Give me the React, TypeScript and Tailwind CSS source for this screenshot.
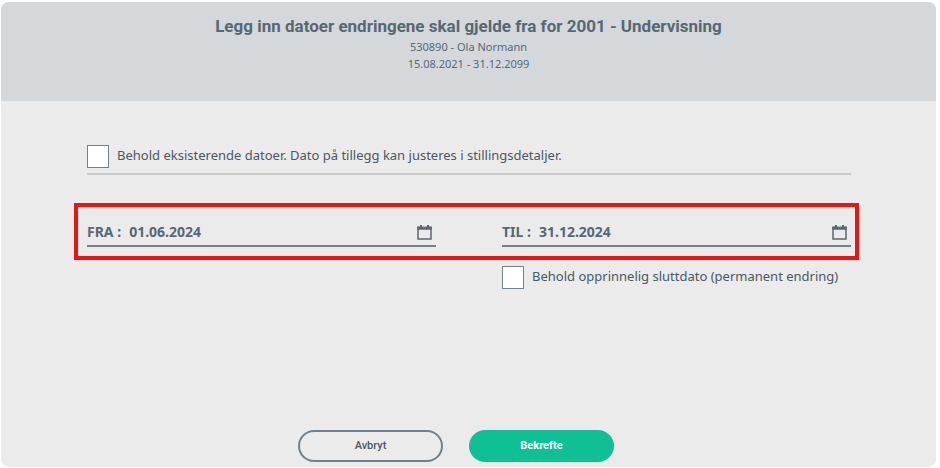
import React, { useState } from 'react';

const CalendarIcon: React.FC = () => (
  <svg className="w-[15px] h-[15px]" viewBox="0 0 15 15" fill="none" aria-hidden="true">
    <path d="M1 2.500h13v11.500H1z" stroke="currentColor" strokeWidth={1.5} />
    <path d="M.3 1.500h14.400v3.200H.3z" fill="currentColor" />
    <path d="M3 0h2v3H3zM10 0h2v3h-2z" fill="currentColor" />
    <path d="M5.600 1.200h3.800v1H5.600z" fill="#ebebeb" opacity={0.5} />
  </svg>
);

interface CheckboxProps {
  id: string;
  label: string;
}

const Checkbox: React.FC<CheckboxProps> = ({ id, label }) => {
  const [checked, setChecked] = useState(false);

  return (
    <div className="flex items-start gap-2">
      <input
        id={id}
        type="checkbox"
        checked={checked}
        onChange={e => setChecked(e.target.checked)}
        className="appearance-none shrink-0 w-[22px] h-[23px] bg-white border border-[#74828c] checked:bg-[#10c095]"
      />
      <label htmlFor={id} className="text-[13px] leading-5 text-[#4a5863]">{label}</label>
    </div>
  );
};

interface DateFieldProps {
  id: string;
  label: string;
  initial: string;
}

const DateField: React.FC<DateFieldProps> = ({ id, label, initial }) => {
  const [value, setValue] = useState(initial);

  return (
    <div className="flex items-center gap-2 h-7 pr-1 border-b-2 border-[#71808b] text-sm font-bold text-[#566874]">
      <label htmlFor={id}>{label}</label>
      <input
        id={id}
        type="text"
        value={value}
        onChange={e => setValue(e.target.value)}
        className="min-w-0 flex-1 bg-transparent outline-none"
      />
      <button type="button" aria-label="Velg dato">
        <CalendarIcon />
      </button>
    </div>
  );
};

const App: React.FC = () => {
  return (
    <div className="min-h-screen flex bg-white pt-[2px] pr-[4px] pb-px pl-px font-['Noto_Sans',sans-serif]">
      <div className="flex-1 flex flex-col rounded-lg overflow-hidden bg-[#ebebeb]">
        <header className="bg-[#d4d8db] pt-3 pb-[29px] text-center text-[#566874]">
          <h1 className="font-[Roboto,sans-serif] text-[17px] leading-6 font-bold">
            Legg inn datoer endringene skal gjelde fra for 2001 - Undervisning
          </h1>
          <p className="text-[11px] leading-[17px]">530890 - Ola Normann</p>
          <p className="text-[11px] leading-[17px]">15.08.2021 - 31.12.2099</p>
        </header>

        <form className="flex-1 flex flex-col pt-11 pr-[77px] pb-[5px] pl-[73px]" onSubmit={e => e.preventDefault()}>
          <div className="ml-[13px] mr-2 pb-[5px] border-b-2 border-[#c9c9c9]">
            <Checkbox id="keep-dates" label="Behold eksisterende datoer. Dato på tillegg kan justeres i stillingsdetaljer." />
          </div>

          <div className="mt-7 border-4 border-[#ec1313] pt-3 pr-1 pb-[9px] pl-[9px] grid grid-cols-2 gap-[66px]">
            <DateField id="from" label="FRA :" initial="01.06.2024" />
            <DateField id="to" label="TIL :" initial="31.12.2024" />
          </div>

          <div className="mt-[6px] ml-[13px] mr-2 grid grid-cols-2 gap-[66px]">
            <div className="col-start-2">
              <Checkbox id="keep-end" label="Behold opprinnelig sluttdato (permanent endring)" />
            </div>
          </div>

          <div className="mt-auto pr-[21px] flex justify-center gap-[26px] font-[Roboto,sans-serif] text-[11px]">
            <button type="button" className="w-[145px] h-8 rounded-full border-2 border-[#71808b] font-medium text-[#4a5863]">
              Avbryt
            </button>
            <button type="submit" className="w-[145px] h-8 rounded-full bg-[#10c095] font-bold text-white">
              Bekrefte
            </button>
          </div>
        </form>
      </div>
    </div>
  );
};

export default App;
